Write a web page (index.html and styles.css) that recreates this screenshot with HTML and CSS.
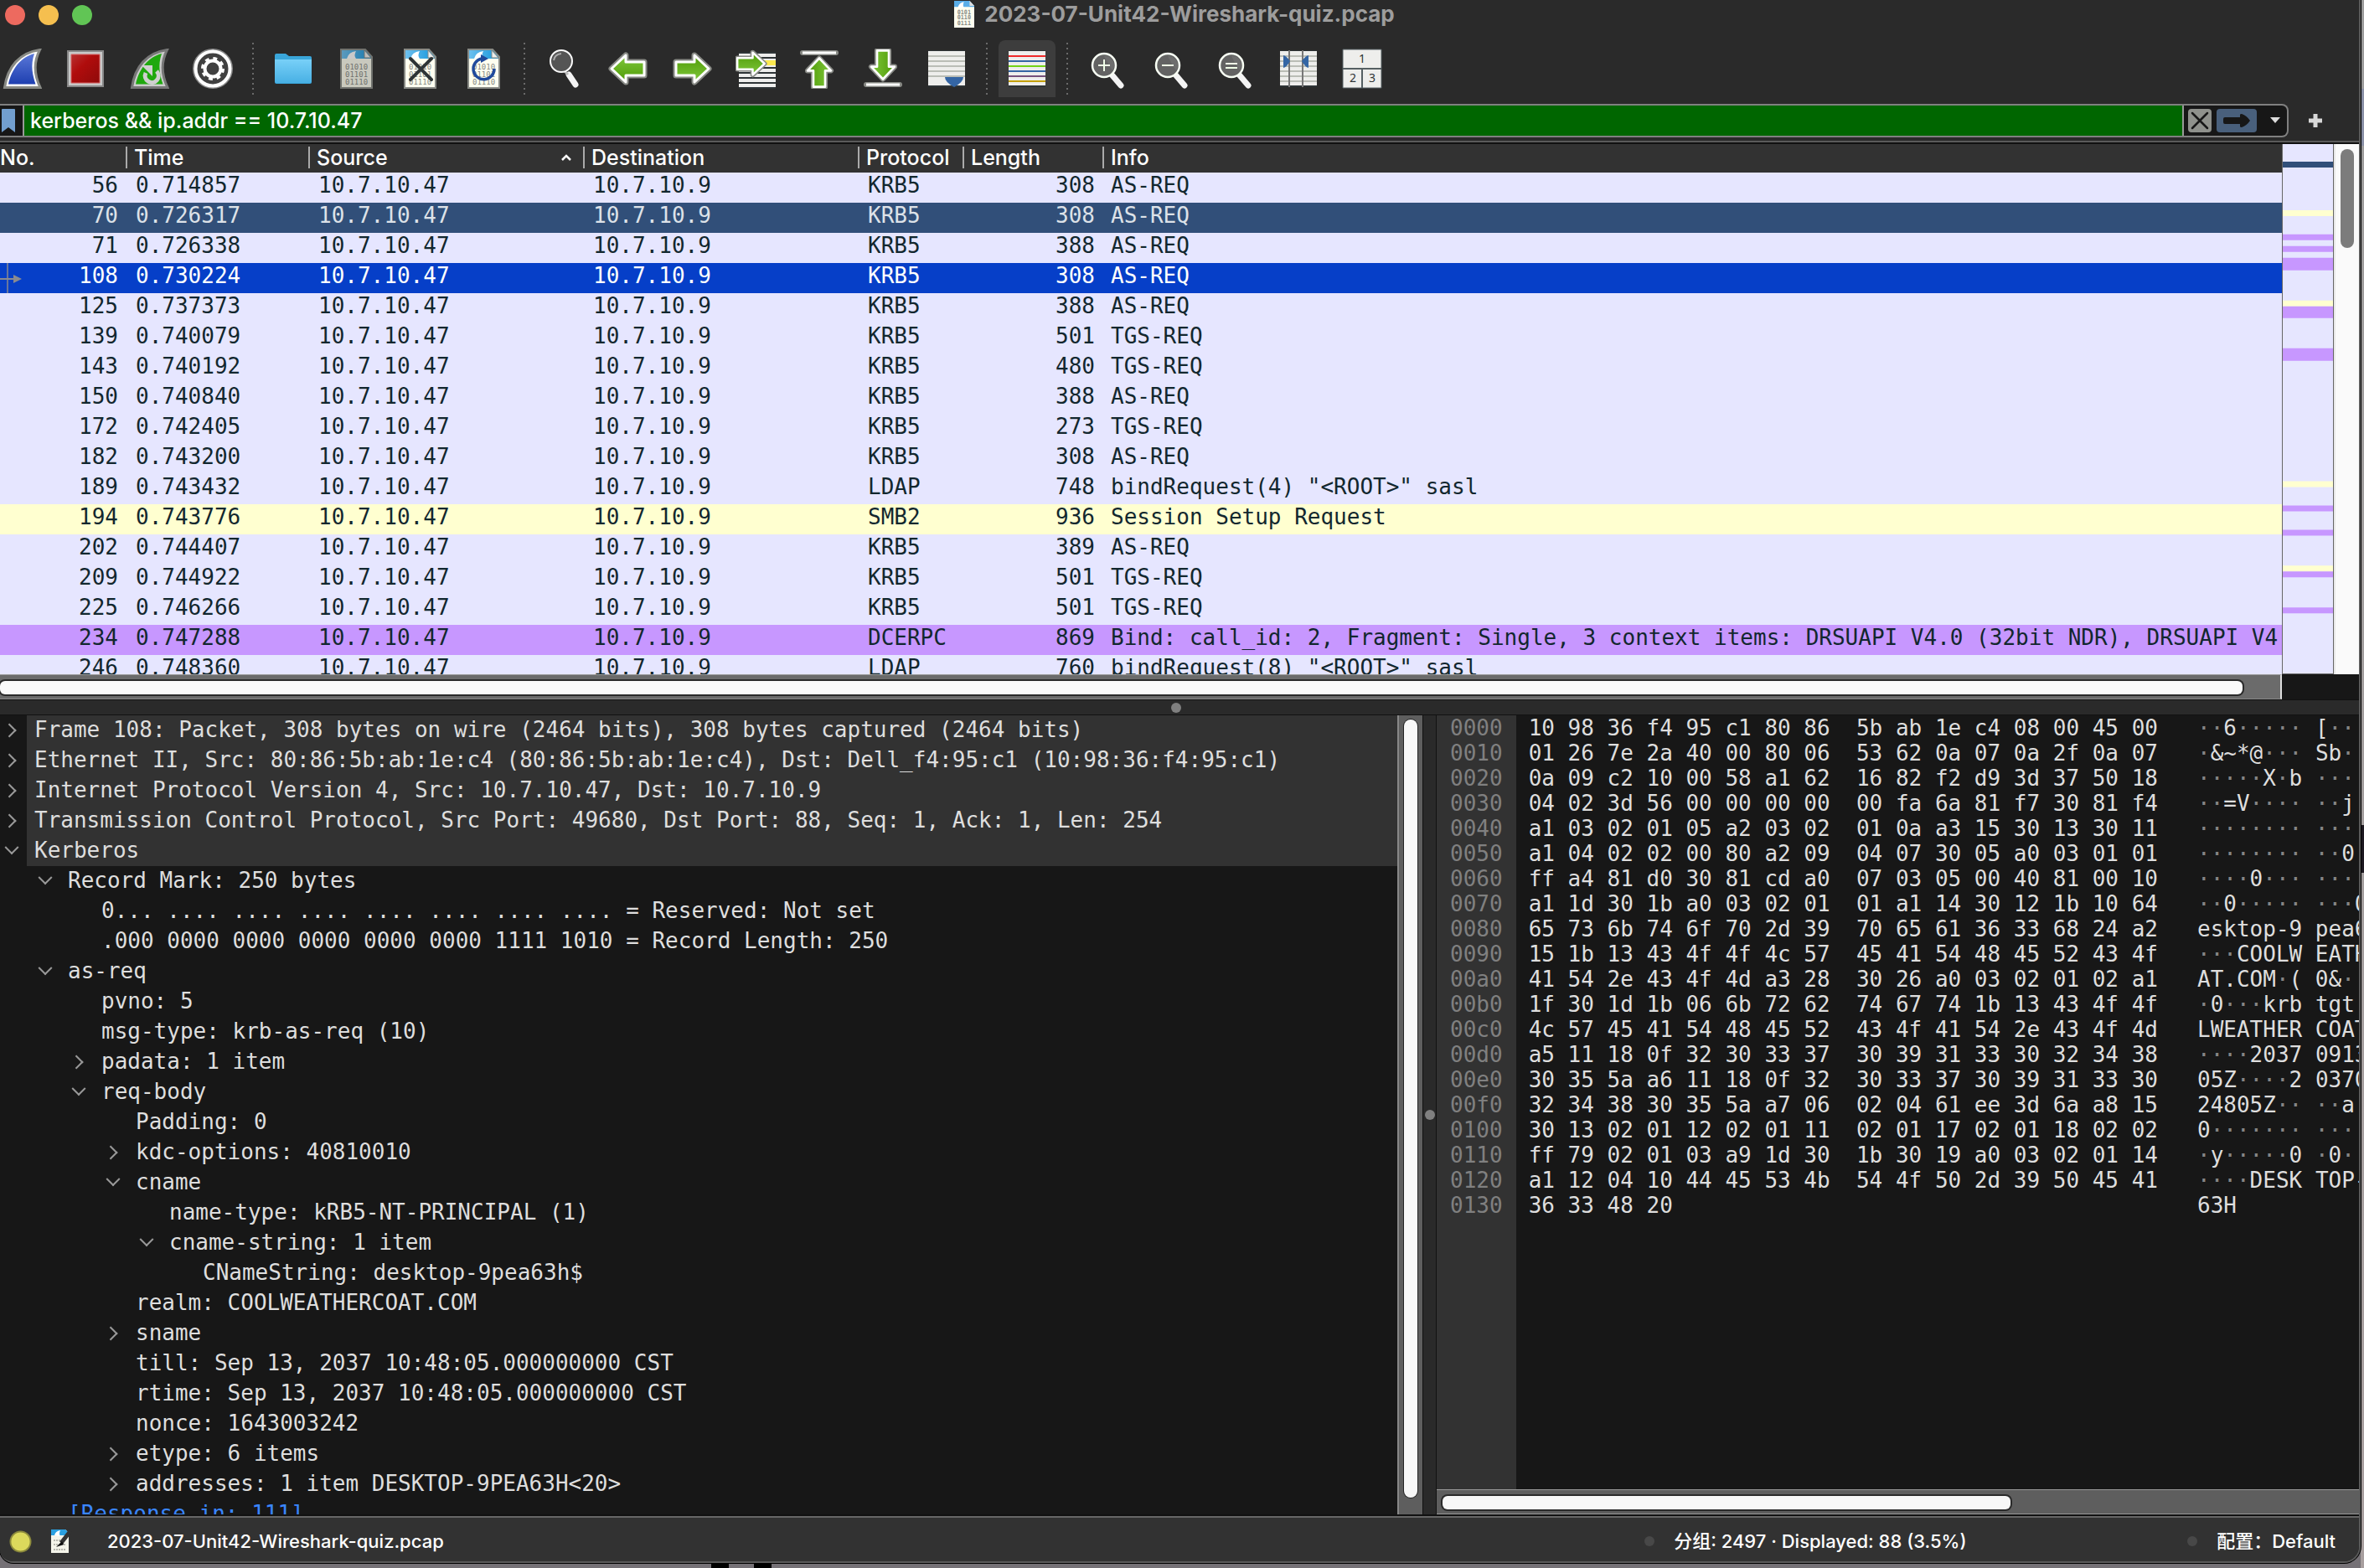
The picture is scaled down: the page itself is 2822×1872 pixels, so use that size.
FILE: index.html
```html
<!DOCTYPE html>
<html lang="en">
<head>
<meta charset="utf-8">
<title>2023-07-Unit42-Wireshark-quiz.pcap</title>
<link rel="stylesheet" href="styles.css">
</head>
<body>
<svg class="defs" aria-hidden="true">
  <defs>
    <linearGradient id="blue" x1="0" y1="0" x2="0" y2="1"><stop offset="0" stop-color="#5a78d8"/><stop offset="1" stop-color="#1e3fb0"/></linearGradient>
    <linearGradient id="red" x1="0" y1="0" x2="1" y2="1"><stop offset="0" stop-color="#b83030"/><stop offset=".4" stop-color="#b00c0c"/><stop offset="1" stop-color="#8e0a0a"/></linearGradient>
    <linearGradient id="green" x1="0" y1="0" x2="0" y2="1"><stop offset="0" stop-color="#80c83c"/><stop offset="1" stop-color="#4e9a06"/></linearGradient>
    <linearGradient id="sky" x1="0" y1="0" x2="1" y2="0"><stop offset="0" stop-color="#6ec0ee"/><stop offset="1" stop-color="#1496dc"/></linearGradient>
    <linearGradient id="folder" x1="0" y1="0" x2="0" y2="1"><stop offset="0" stop-color="#78d0f8"/><stop offset="1" stop-color="#48b0e4"/></linearGradient>
    <symbol id="doc" viewBox="0 0 39 48">
      <path d="M1 1H30L38 10V47H1Z" fill="#fffff0" stroke="#888a85" stroke-width="2"/>
      <path d="M2 2H30L37 10V12H2Z" fill="url(#sky)"/>
      <path d="M8 12Q10 4 19 3Q16 8 19 12Z" fill="#fff"/>
      <path d="M29 2V11H37Z" fill="#eeeeec" stroke="#888a85"/>
      <text x="6" y="25" class="bits">01010</text><text x="6" y="34" class="bits">01101</text><text x="6" y="43" class="bits">01110</text>
    </symbol>
    <symbol id="arrow" viewBox="0 0 48 40">
      <path d="M4 20L21 4V12H43V28H21V36Z" fill="#fff" stroke="#888a85" stroke-width="7" stroke-linejoin="round"/>
      <path d="M4 20L21 4V12H43V28H21V36Z" fill="url(#green)" stroke="#fff" stroke-width="3" stroke-linejoin="round"/>
    </symbol>
    <symbol id="lens" viewBox="0 0 44 44">
      <path d="M25 27L36 40" stroke="#f4f4f4" stroke-width="7" stroke-linecap="round"/>
      <circle cx="16" cy="16" r="14" fill="#636363" stroke="#f8fff4" stroke-width="2.500"/>
      <path d="M16 5A11 11 0 0 1 26 22Q20 14 16 5Z" fill="#777" opacity=".6"/>
    </symbol>
    <symbol id="lines" viewBox="0 0 44 44">
      <path d="M0 0H44V44H0Z" fill="#2e3436"/><path d="M0 1H44V42H0Z" fill="#eeeeec"/>
    </symbol>
  </defs>
</svg>
<div class="window">
  <header class="titlebar">
    <div class="lights"><button class="light close" aria-label="Close"></button><button class="light minimise" aria-label="Minimise"></button><button class="light zoom" aria-label="Zoom"></button></div>
    <svg class="title-icon" viewBox="0 0 39 48" preserveAspectRatio="none"><path d="M0 0H30L39 9V48H0Z" fill="#fffff0"/><path d="M0 0H30L39 9V11H0Z" fill="#5aaee8"/><path d="M7 12Q10 3 19 2Q16 8 19 12Z" fill="#fff"/><path d="M30 0V9H39Z" fill="#ddd"/><text x="6" y="24" class="bits big">0101</text><text x="6" y="33" class="bits big">0110</text><text x="6" y="43" class="bits big">0111</text></svg>
    <h1 class="title">2023-07-Unit42-Wireshark-quiz.pcap</h1>
  </header>

  <nav class="toolbar" aria-label="Main toolbar">
    <button class="tool" aria-label="Start capture"><svg viewBox="0 0 48 48"><path d="M3.500 46.500C7 22 21 5 45.500 1.500C37 18 40 34 46 46.500Z" fill="#fff" stroke="#888a85" stroke-width="3"/><path d="M8 42.500C12 24 23 10 39 6C34 20 37 32 40.500 42.500Z" fill="url(#blue)"/></svg></button>
    <button class="tool" aria-label="Stop capture"><svg viewBox="0 0 48 48"><path d="M3 3H45V45H3Z" fill="#c8c8c8" stroke="#888" stroke-width="2"/><path d="M7 7H41V41H7Z" fill="url(#red)" stroke="#d86060"/></svg></button>
    <button class="tool" aria-label="Restart capture"><svg viewBox="0 0 48 48"><path d="M3.500 46.500C7 22 21 5 45.500 1.500C37 18 40 34 46 46.500Z" fill="#ccc" stroke="#777" stroke-width="3"/><path d="M8 42.500C12 24 23 10 39 6C34 20 37 32 40.500 42.500Z" fill="#1fa80e"/><path d="M33 27A8 8 0 1 1 20 29" fill="none" stroke="#d0d0d0" stroke-width="5"/><path d="M15 20H28V33Z" fill="#d0d0d0"/></svg></button>
    <button class="tool" aria-label="Capture options"><svg viewBox="0 0 48 48"><circle cx="24" cy="24" r="22" fill="#404040" stroke="#888" stroke-width="4"/><circle cx="24" cy="24" r="20.500" fill="none" stroke="#fff" stroke-width="4"/><circle cx="24" cy="24" r="9.500" fill="none" stroke="#fff" stroke-width="4"/><circle cx="24" cy="24" r="12" fill="none" stroke="#fff" stroke-width="4" stroke-dasharray="4.700 4.725"/></svg></button>
    <span class="sep"></span>
    <button class="tool" aria-label="Open"><svg viewBox="0 0 48 48"><path d="M2 8Q2 6 4 6H15L19 9H44Q46 9 46 11V40Q46 42 44 42H4Q2 42 2 40Z" fill="#3aa6da"/><path d="M2 13H46V39Q46 41 44 41H4Q2 41 2 39Z" fill="url(#folder)"/></svg></button>
    <button class="tool" aria-label="Save" disabled><svg class="faded" viewBox="0 0 48 48"><use href="#doc" x="4" width="39" height="48"/></svg></button>
    <button class="tool" aria-label="Close file"><svg viewBox="0 0 48 48"><use href="#doc" x="4" width="39" height="48"/><path d="M12 12L37 37M37 12L12 37" stroke="#2e3436" stroke-width="4" stroke-linecap="round"/></svg></button>
    <button class="tool" aria-label="Reload"><svg viewBox="0 0 48 48"><use href="#doc" x="4" width="39" height="48"/><path d="M36 24A12.500 12.500 0 1 1 21 12" fill="none" stroke="#204a9c" stroke-width="3.500"/><path d="M20 7L29 12L20 17Z" fill="#204a9c"/></svg></button>
    <span class="sep"></span>
    <button class="tool" aria-label="Find packet"><svg viewBox="0 0 48 48"><path d="M29 31L37 43" stroke="#f4f4f4" stroke-width="7" stroke-linecap="round"/><path d="M24 27L28 31" stroke="#bbb" stroke-width="3"/><ellipse cx="20" cy="15" rx="13" ry="13" fill="#555" stroke="#fafafa" stroke-width="2"/><path d="M11 14Q12 7 20 6" fill="none" stroke="#aaa" stroke-width="2"/></svg></button>
    <button class="tool" aria-label="Previous packet"><svg viewBox="0 0 48 48"><use href="#arrow" y="4" width="48" height="40"/></svg></button>
    <button class="tool" aria-label="Next packet"><svg viewBox="0 0 48 48"><g transform="rotate(180 24 24)"><use href="#arrow" y="4" width="48" height="40"/></g></svg></button>
    <button class="tool" aria-label="Go to packet"><svg viewBox="0 0 48 48"><path d="M4 4H48V48H4Z" fill="#2e3436"/><path d="M4 8H48M4 14H48M4 20H48M4 26H48M4 32H48M4 38H48M4 44H48" stroke="#eeeeec" stroke-width="4"/><path d="M34 14H48V20H34Z" fill="#fce94f"/><g transform="rotate(180 19 18)"><use href="#arrow" x="0" y="1" width="40" height="34"/></g></svg></button>
    <button class="tool" aria-label="First packet"><svg viewBox="0 0 48 48"><path d="M4 5H44" stroke="#888a85" stroke-width="6" stroke-linecap="round"/><path d="M4 5H44" stroke="#fff" stroke-width="3"/><g transform="translate(24 28) rotate(90)"><use href="#arrow" x="-20" y="-18" width="42" height="36"/></g></svg></button>
    <button class="tool" aria-label="Last packet"><svg viewBox="0 0 48 48"><path d="M4 43H44" stroke="#888a85" stroke-width="6" stroke-linecap="round"/><path d="M4 43H44" stroke="#fff" stroke-width="3"/><g transform="translate(24 20) rotate(-90)"><use href="#arrow" x="-20" y="-18" width="42" height="36"/></g></svg></button>
    <button class="tool" aria-label="Auto scroll"><svg viewBox="0 0 48 48"><use href="#lines" x="2" y="2" width="44" height="44"/><path d="M2 9H46M2 15H46M2 21H46M2 27H46M2 33H46" stroke="#babdb6" stroke-width="2"/><path d="M22 34H44Q44 40 33 46Q22 40 22 34Z" fill="#3465a4"/></svg></button>
    <span class="sep"></span>
    <button class="tool pressed" aria-label="Colorize" aria-pressed="true"><svg viewBox="0 0 48 48"><use href="#lines" x="2" y="2" width="44" height="44"/><path d="M2 9H46" stroke="#ef2929" stroke-width="2"/><path d="M2 15H46M2 27H46" stroke="#3465a4" stroke-width="2"/><path d="M2 21H46" stroke="#73d216" stroke-width="2"/><path d="M2 33H46" stroke="#75507b" stroke-width="2"/><path d="M2 39H46" stroke="#c4a000" stroke-width="2"/></svg></button>
    <span class="sep"></span>
    <button class="tool" aria-label="Zoom in"><svg viewBox="0 0 48 48"><use href="#lens" x="4" y="4" width="44" height="44"/><path d="M13 20H27M20 13V27" stroke="#f0ffe8" stroke-width="2"/></svg></button>
    <button class="tool" aria-label="Zoom out"><svg viewBox="0 0 48 48"><use href="#lens" x="4" y="4" width="44" height="44"/><path d="M13 20H27" stroke="#f0ffe8" stroke-width="2"/></svg></button>
    <button class="tool" aria-label="Normal size"><svg viewBox="0 0 48 48"><use href="#lens" x="4" y="4" width="44" height="44"/><path d="M13 18H27M13 23H27" stroke="#f0ffe8" stroke-width="2"/></svg></button>
    <button class="tool" aria-label="Resize columns"><svg viewBox="0 0 48 48"><use href="#lines" x="2" y="2" width="44" height="44"/><path d="M2 9H46M2 15H46M2 21H46M2 27H46M2 33H46M2 39H46" stroke="#babdb6" stroke-width="2"/><path d="M13 2V46M29 2V46" stroke="#777" stroke-width="2"/><path d="M6 8Q10 9 14 15Q10 22 6 23ZM36 8Q32 9 28 15Q32 22 36 23Z" fill="#3465a4"/></svg></button>
    <button class="tool" aria-label="Layout"><svg viewBox="0 0 48 48"><path d="M1 1H47V47H1Z" fill="#eeeeec" stroke="#555f62" stroke-width="1"/><path d="M1 24H47M24 24V47" stroke="#555f62" stroke-width="2"/><text x="24" y="17" class="pane-no">1</text><text x="13" y="40" class="pane-no">2</text><text x="36" y="40" class="pane-no">3</text></svg></button>
  </nav>

  <form class="filter">
    <div class="filter-box">
      <button type="button" class="bookmark" aria-label="Filter bookmarks"><svg viewBox="0 0 16 28"><path d="M0 1Q0 0 1 0H15Q16 0 16 1V28L8 22L0 28Z" fill="#729fcf"/></svg></button>
      <input class="filter-input" type="text" aria-label="Display filter" value="kerberos &amp;&amp; ip.addr == 10.7.10.47">
      <div class="filter-actions">
        <button type="button" class="clear" aria-label="Clear filter"><svg viewBox="0 0 28 28"><path d="M5 5L23 23M23 5L5 23" stroke="#171717" stroke-width="2.500" stroke-linecap="round"/></svg></button>
        <button type="button" class="apply" aria-label="Apply filter"><svg viewBox="0 0 48 28"><path d="M8 12Q8 10 10 10H28V7Q28 6 30 6Q36 8 40 14Q36 20 30 22Q28 22 28 21V18H10Q8 18 8 16Z" fill="#171717"/></svg></button>
        <button type="button" class="drop" aria-label="Recent filters"><svg viewBox="0 0 12 8"><path d="M0 0H12L6 7Z" fill="#ddd"/></svg></button>
      </div>
    </div>
    <button type="button" class="plus" aria-label="Add filter button"><svg viewBox="0 0 16 16"><path d="M0 8H16M8 0V16" stroke="#d8d8d8" stroke-width="5"/></svg></button>
  </form>

  <main class="panes">
    <section class="packets" aria-label="Packet list">
      <div class="list">
        <table>
          <colgroup><col class="c-no"><col class="c-time"><col class="c-src"><col class="c-dst"><col class="c-proto"><col class="c-len"><col></colgroup>
          <thead><tr><th><span>No.</span></th><th><span>Time</span></th><th><span>Source<svg class="sort" viewBox="0 0 12 8"><path d="M1 7L6 2L11 7" fill="none" stroke="#fff" stroke-width="2.500"/></svg></span></th><th><span>Destination</span></th><th><span>Protocol</span></th><th><span>Length</span></th><th><span>Info</span></th></tr></thead>
          <tbody>
            <tr><td>56</td><td>0.714857</td><td>10.7.10.47</td><td>10.7.10.9</td><td>KRB5</td><td>308</td><td>AS-REQ</td></tr>
            <tr class="ignored"><td>70</td><td>0.726317</td><td>10.7.10.47</td><td>10.7.10.9</td><td>KRB5</td><td>308</td><td>AS-REQ</td></tr>
            <tr><td>71</td><td>0.726338</td><td>10.7.10.47</td><td>10.7.10.9</td><td>KRB5</td><td>388</td><td>AS-REQ</td></tr>
            <tr class="selected"><td><svg class="related" viewBox="0 0 28 36"><path d="M9 0V36" stroke="#8a8a90" stroke-width="1.500"/><path d="M0 19H18" stroke="#8a8a90" stroke-width="2"/><path d="M16 14L26 19L16 24Z" fill="#8a8a90"/></svg>108</td><td>0.730224</td><td>10.7.10.47</td><td>10.7.10.9</td><td>KRB5</td><td>308</td><td>AS-REQ</td></tr>
            <tr><td>125</td><td>0.737373</td><td>10.7.10.47</td><td>10.7.10.9</td><td>KRB5</td><td>388</td><td>AS-REQ</td></tr>
            <tr><td>139</td><td>0.740079</td><td>10.7.10.47</td><td>10.7.10.9</td><td>KRB5</td><td>501</td><td>TGS-REQ</td></tr>
            <tr><td>143</td><td>0.740192</td><td>10.7.10.47</td><td>10.7.10.9</td><td>KRB5</td><td>480</td><td>TGS-REQ</td></tr>
            <tr><td>150</td><td>0.740840</td><td>10.7.10.47</td><td>10.7.10.9</td><td>KRB5</td><td>388</td><td>AS-REQ</td></tr>
            <tr><td>172</td><td>0.742405</td><td>10.7.10.47</td><td>10.7.10.9</td><td>KRB5</td><td>273</td><td>TGS-REQ</td></tr>
            <tr><td>182</td><td>0.743200</td><td>10.7.10.47</td><td>10.7.10.9</td><td>KRB5</td><td>308</td><td>AS-REQ</td></tr>
            <tr><td>189</td><td>0.743432</td><td>10.7.10.47</td><td>10.7.10.9</td><td>LDAP</td><td>748</td><td>bindRequest(4) "&lt;ROOT&gt;" sasl</td></tr>
            <tr class="smb"><td>194</td><td>0.743776</td><td>10.7.10.47</td><td>10.7.10.9</td><td>SMB2</td><td>936</td><td>Session Setup Request</td></tr>
            <tr><td>202</td><td>0.744407</td><td>10.7.10.47</td><td>10.7.10.9</td><td>KRB5</td><td>389</td><td>AS-REQ</td></tr>
            <tr><td>209</td><td>0.744922</td><td>10.7.10.47</td><td>10.7.10.9</td><td>KRB5</td><td>501</td><td>TGS-REQ</td></tr>
            <tr><td>225</td><td>0.746266</td><td>10.7.10.47</td><td>10.7.10.9</td><td>KRB5</td><td>501</td><td>TGS-REQ</td></tr>
            <tr class="rpc"><td>234</td><td>0.747288</td><td>10.7.10.47</td><td>10.7.10.9</td><td>DCERPC</td><td>869</td><td>Bind: call_id: 2, Fragment: Single, 3 context items: DRSUAPI V4.0 (32bit NDR), DRSUAPI V4.</td></tr>
            <tr><td>246</td><td>0.748360</td><td>10.7.10.47</td><td>10.7.10.9</td><td>LDAP</td><td>760</td><td>bindRequest(8) "&lt;ROOT&gt;" sasl</td></tr>
          </tbody>
        </table>
      </div>
      <svg class="minimap" viewBox="0 0 60 633" preserveAspectRatio="none" aria-hidden="true">
        <path d="M0 21H60V28H0Z" fill="#314f79"/>
        <path d="M0 79H60V86H0ZM0 187H60V194H0ZM0 403H60V410H0ZM0 504H60V511H0Z" fill="#ffffd0"/>
        <path d="M0 108H60V115H0ZM0 122H60V129H0ZM0 136H60V151H0ZM0 194H60V208H0ZM0 244H60V259H0ZM0 432H60V439H0ZM0 461H60V468H0ZM0 511H60V518H0ZM0 554H60V561H0Z" fill="#c797ff"/>
      </svg>
      <div class="vbar light-bar"><div class="thumb"></div></div>
      <div class="hbar"><div class="thumb"></div></div>
      <div class="corner"></div>
    </section>
    <div class="split-h"><i class="grip"></i></div>
    <section class="lower">
      <div class="details" aria-label="Packet details">
        <ul class="tree">
          <li class="row top shut">Frame 108: Packet, 308 bytes on wire (2464 bits), 308 bytes captured (2464 bits)</li>
          <li class="row top shut">Ethernet II, Src: 80:86:5b:ab:1e:c4 (80:86:5b:ab:1e:c4), Dst: Dell_f4:95:c1 (10:98:36:f4:95:c1)</li>
          <li class="row top shut">Internet Protocol Version 4, Src: 10.7.10.47, Dst: 10.7.10.9</li>
          <li class="row top shut">Transmission Control Protocol, Src Port: 49680, Dst Port: 88, Seq: 1, Ack: 1, Len: 254</li>
          <li class="row top open">Kerberos</li>
          <li class="row l1 open">Record Mark: 250 bytes</li>
          <li class="row l2">0... .... .... .... .... .... .... .... = Reserved: Not set</li>
          <li class="row l2">.000 0000 0000 0000 0000 0000 1111 1010 = Record Length: 250</li>
          <li class="row l1 open">as-req</li>
          <li class="row l2">pvno: 5</li>
          <li class="row l2">msg-type: krb-as-req (10)</li>
          <li class="row l2 shut">padata: 1 item</li>
          <li class="row l2 open">req-body</li>
          <li class="row l3">Padding: 0</li>
          <li class="row l3 shut">kdc-options: 40810010</li>
          <li class="row l3 open">cname</li>
          <li class="row l4">name-type: kRB5-NT-PRINCIPAL (1)</li>
          <li class="row l4 open">cname-string: 1 item</li>
          <li class="row l5">CNameString: desktop-9pea63h$</li>
          <li class="row l3">realm: COOLWEATHERCOAT.COM</li>
          <li class="row l3 shut">sname</li>
          <li class="row l3">till: Sep 13, 2037 10:48:05.000000000 CST</li>
          <li class="row l3">rtime: Sep 13, 2037 10:48:05.000000000 CST</li>
          <li class="row l3">nonce: 1643003242</li>
          <li class="row l3 shut">etype: 6 items</li>
          <li class="row l3 shut">addresses: 1 item DESKTOP-9PEA63H&lt;20&gt;</li>
          <li class="row l1"><a href="#frame-111">[Response in: 111]</a></li>
        </ul>
        <div class="vbar"><div class="thumb"></div></div>
      </div>
      <div class="split-v"><i class="grip"></i></div>
      <div class="bytes" aria-label="Packet bytes">
        <div class="dump">
<pre class="offsets">0000
0010
0020
0030
0040
0050
0060
0070
0080
0090
00a0
00b0
00c0
00d0
00e0
00f0
0100
0110
0120
0130</pre>
<pre class="hex">10 98 36 f4 95 c1 80 86  5b ab 1e c4 08 00 45 00
01 26 7e 2a 40 00 80 06  53 62 0a 07 0a 2f 0a 07
0a 09 c2 10 00 58 a1 62  16 82 f2 d9 3d 37 50 18
04 02 3d 56 00 00 00 00  00 fa 6a 81 f7 30 81 f4
a1 03 02 01 05 a2 03 02  01 0a a3 15 30 13 30 11
a1 04 02 02 00 80 a2 09  04 07 30 05 a0 03 01 01
ff a4 81 d0 30 81 cd a0  07 03 05 00 40 81 00 10
a1 1d 30 1b a0 03 02 01  01 a1 14 30 12 1b 10 64
65 73 6b 74 6f 70 2d 39  70 65 61 36 33 68 24 a2
15 1b 13 43 4f 4f 4c 57  45 41 54 48 45 52 43 4f
41 54 2e 43 4f 4d a3 28  30 26 a0 03 02 01 02 a1
1f 30 1d 1b 06 6b 72 62  74 67 74 1b 13 43 4f 4f
4c 57 45 41 54 48 45 52  43 4f 41 54 2e 43 4f 4d
a5 11 18 0f 32 30 33 37  30 39 31 33 30 32 34 38
30 35 5a a6 11 18 0f 32  30 33 37 30 39 31 33 30
32 34 38 30 35 5a a7 06  02 04 61 ee 3d 6a a8 15
30 13 02 01 12 02 01 11  02 01 17 02 01 18 02 02
ff 79 02 01 03 a9 1d 30  1b 30 19 a0 03 02 01 14
a1 12 04 10 44 45 53 4b  54 4f 50 2d 39 50 45 41
36 33 48 20</pre>
<pre class="ascii">··<b>6</b>····· <b>[</b>···
·<b>&amp;~*@</b>··· <b>Sb</b>··
·····<b>X</b>·<b>b</b> ····
··<b>=V</b>···· ··<b>j</b>·
········ ····
········ ··<b>0</b>·
····<b>0</b>··· ····
··<b>0</b>····· ···<b>0</b>
<b>esktop-9 pea6</b>
···<b>COOLW EATH</b>
<b>AT.COM</b>·<b>( 0&amp;</b>··
·<b>0</b>···<b>krb tgt</b>·
<b>LWEATHER COAT</b>
····<b>2037 0913</b>
<b>05Z</b>····<b>2 0370</b>
<b>24805Z</b>·· ··<b>a</b>·
<b>0</b>······· ····
·<b>y</b>·····<b>0</b> ·<b>0</b>··
····<b>DESK TOP-</b>
<b>63H</b></pre>
        </div>
        <div class="hbar"><div class="thumb"></div></div>
      </div>
    </section>
  </main>

  <footer class="status">
    <div class="file">
      <svg class="expert" viewBox="0 0 28 28"><circle cx="14" cy="14" r="12.500" fill="#dcd95c" stroke="#8c8a3c" stroke-width="2"/></svg>
      <svg class="comment" viewBox="0 0 28 30"><path d="M1 1H18L22 5V29H1Z" fill="#f4f4ea"/><path d="M1 1H18L22 5V8H1Z" fill="#2aa0e0"/><path d="M5 8Q6 3 12 2Q10 6 12 9Z" fill="#fff"/><path d="M4 14H18M4 19H18M4 25H18" stroke="#b8b8b0" stroke-width="2" stroke-dasharray="2 1"/><path d="M24 3L13 17" stroke="#333" stroke-width="5"/><path d="M14 15L7 22L16 19Z" fill="#111"/></svg>
      <span>2023-07-Unit42-Wireshark-quiz.pcap</span>
    </div>
    <div class="count"><i class="dot"></i>分组: 2497 · Displayed: 88 (3.5%)</div>
    <div class="profile"><i class="dot"></i>配置：Default</div>
  </footer>
</div>
</body>
</html>
```
FILE: styles.css
```css
*, *::before { box-sizing: border-box; }

body {
  margin: 0;
  height: 100vh;
  overflow: hidden;
  padding: 0 4px 6px 0;
  background:
    linear-gradient(#000, #000) 849px 100% / 21px 6px no-repeat,
    linear-gradient(#000, #000) 900px 100% / 21px 6px no-repeat,
    linear-gradient(#8a90a6, #8a90a6) 100% 106px / 4px 68px no-repeat,
    linear-gradient(#1c1820, #1c1820) 100% 985px / 4px 57px no-repeat,
    linear-gradient(#9c9c9c, #a89f9f) 100% 0 / 4px 100% no-repeat,
    #757176;
  color: #fff;
  font-family: Inter, "Noto Sans CJK SC", sans-serif;
  font-size: 22px;
}

button { margin: 0; padding: 0; border: 0; background: none; }
svg { display: block; }
.defs { position: absolute; width: 0; height: 0; }

.window {
  height: 100%;
  display: flex;
  flex-direction: column;
  overflow: hidden;
  background: #2a2a2a;
  border: solid #5a5a5a;
  border-width: 0 2px 2px 0;
  border-radius: 0 0 20px 16px;
  box-shadow: 0 0 0 1px #000;
}

/* Title bar */
.titlebar {
  flex: none;
  height: 36px;
  display: flex;
  align-items: center;
  justify-content: center;
  gap: 12px;
  position: relative;
  padding: 0 12px 2px 0;
}
.lights { position: absolute; left: 6px; top: 6px; display: flex; gap: 16px; }
.light { width: 24px; height: 24px; border-radius: 50%; }
.close { background: #ed6a5f; }
.minimise { background: #f5bf4f; }
.zoom { background: #61c555; }
.title-icon { width: 24px; height: 32px; }
.title { margin: 0; font-size: 26px; line-height: 32px; font-weight: 700; color: #9d9d9d; }
.bits { font: 9px "DejaVu Sans Mono", monospace; fill: #888a85; }
.bits.big { font-size: 11px; font-weight: 700; }

/* Toolbar */
.toolbar {
  flex: none;
  height: 88px;
  display: flex;
  align-items: center;
  margin-left: -12px;
  padding-top: 4px;
}
.tool { flex: none; width: 68px; height: 68px; margin: 0 4px; padding: 10px; border-radius: 8px 8px 0 0; }
.tool svg { width: 48px; height: 48px; }
.tool.pressed { background: #3d3d3d; }
.faded { opacity: .75; }
.sep {
  flex: none;
  width: 2px;
  height: 62px;
  margin: 0 9px;
  background: repeating-linear-gradient(#6a6a6a 0 2px, transparent 2px 6px);
}
.pane-no { font: 14px "Noto Sans", sans-serif; text-anchor: middle; fill: #2e3436; }

/* Filter bar */
.filter {
  flex: none;
  display: flex;
  align-items: center;
  gap: 24px;
  padding: 0 44px 4px 0;
  border-bottom: 2px solid #5a5a5a;
  box-shadow: 0 2px 0 #111;
  margin-bottom: 2px;
}
.filter-box {
  flex: 1;
  height: 40px;
  display: flex;
  overflow: hidden;
  background: #171717;
  border: solid #808080;
  border-width: 2px 2px 2px 0;
  border-radius: 0 8px 8px 0;
}
.bookmark { width: 29px; padding: 4px 9px 4px 2px; border-right: 2px solid #999; }
.bookmark svg { width: 16px; height: 28px; }
.filter-input {
  flex: 1;
  min-width: 0;
  padding: 0 7px;
  border: 0;
  outline: 0;
  background: #006600;
  color: #fff;
  font: 500 25px/36px Inter, sans-serif;
}
.filter-actions { display: flex; align-items: center; gap: 6px; padding: 0 8px 0 5px; border-left: 2px solid #999; }
.clear { width: 28px; height: 28px; background: #8f918c; border-radius: 4px; }
.apply { width: 48px; height: 28px; background: #49607c; border-radius: 4px; }
.drop { padding: 0 0 0 10px; }
.drop svg { width: 12px; height: 8px; }
.plus svg { width: 16px; height: 16px; }

/* Panes */
.panes { flex: 1; min-height: 0; display: flex; flex-direction: column; background: #2a2a2a; }
.packets {
  flex: 664 1 0;
  min-height: 0;
  display: grid;
  grid-template: minmax(0, 1fr) 30px / minmax(0, 1fr) 62px 30px;
}
.list { overflow: hidden; background: #e6e6ff; }
table {
  width: 100%;
  table-layout: fixed;
  border-collapse: collapse;
  color: #12272e;
  font: 26px/30px "DejaVu Sans Mono", monospace;
}
.c-no { width: 152px; }
.c-time { width: 218px; }
.c-src { width: 328px; }
.c-dst { width: 328px; }
.c-proto { width: 125px; }
.c-len { width: 167px; }
th {
  height: 34px;
  padding: 0 0 2px;
  background: #323232;
  color: #fff;
  font: 500 25px/26px Inter, sans-serif;
  text-align: left;
}
th span { display: flex; align-items: center; justify-content: space-between; padding: 0 14px 0 8px; border-right: 2px solid #aaa; white-space: nowrap; }
th:first-child span { padding-left: 0; }
th:last-child span { border: 0; }
.sort { width: 12px; height: 8px; }
td { height: 36px; padding: 0 0 6px 10px; white-space: nowrap; overflow: hidden; }
td:first-child, td:nth-child(6) { text-align: right; padding-right: 11px; }
td:first-child { position: relative; }
td:last-child { padding-left: 8px; }
.related { position: absolute; left: 0; top: 0; width: 28px; height: 36px; }
.ignored { background: #314f79; color: #dde2e8; }
.selected { background: #063fc8; color: #fff; }
.smb { background: #ffffd0; }
.rpc { background: #c797ff; }
.minimap { width: 100%; height: 100%; background: #e6e6ff; border: solid #666; border-width: 0 1px 1px; }

.vbar { width: 30px; padding: 5px 6px 20px 8px; background: #5e5e5e; border-left: 2px solid #888; }
.vbar .thumb { width: 16px; height: 100%; border-radius: 8px; background: #f7f7f7; box-shadow: 0 0 0 1px #222; margin-left: -2px; }
.light-bar { padding: 6px; background: #fafafa; border-color: #e8e8e8; }
.light-bar .thumb { height: 19%; margin-left: 0; background: #7c7c7c; box-shadow: none; }
.hbar { height: 30px; padding: 7px 0 0; background: #6b6b6b; border: solid #999; border-width: 1px 0; }
.hbar .thumb { height: 16px; border-radius: 6px; background: #fafafa; box-shadow: 0 0 0 2px #2a2a2a; }
.packets .hbar { border-right: 2px solid #ddd; border-bottom-color: #888; }
.packets .hbar .thumb { width: calc(100% - 45px); }
.corner { grid-column: 2 / 4; background: #171717; }

.split-h, .split-v { flex: none; display: flex; align-items: center; justify-content: center; border: 0 solid #111; }
.split-h { height: 19px; border-width: 1px 0; padding-right: 8px; }
.split-v { border-width: 0 1px; }
.grip { width: 12px; height: 12px; border-radius: 50%; background: #808080; }

.lower {
  flex: 955 1 0;
  min-height: 0;
  display: grid;
  grid-template-columns: 1698fr 17px 1101fr;
  font: 26px/30px "DejaVu Sans Mono", monospace;
  color: #dedede;
  border-bottom: 2px solid #111;
}
.details { display: flex; min-width: 0; overflow: hidden; background: #171717; }
.tree { flex: 1; min-width: 0; margin: 0; padding: 0; list-style: none; overflow: hidden; }
.row {
  display: flex;
  height: 36px;
  line-height: 34px;
  white-space: pre;
}
.row::before { content: ""; flex: none; align-self: center; width: 12px; height: 12px; margin: 0 21px 0 8px; }
.shut::before { border: solid #999; border-width: 2px 2px 0 0; transform: rotate(45deg) translate(-2px, 2px); }
.open::before { border: solid #999; border-width: 0 2px 2px 0; transform: rotate(45deg) translate(-3px, -3px); }
.top { background: linear-gradient(to right, #171717 32px, #323232 32px); }
.l1 { padding-left: 40px; }
.l2 { padding-left: 80px; }
.l3 { padding-left: 121px; }
.l4 { padding-left: 161px; }
.l5 { padding-left: 201px; }
.row a { color: #3a86ff; text-decoration: none; }

.bytes { min-width: 0; display: flex; flex-direction: column; overflow: hidden; background: #171717; }
.dump { flex: 1; min-height: 0; display: flex; overflow: hidden; }
pre { flex: none; margin: 0; font: inherit; }
.offsets { padding: 0 16px; background: #323232; color: #808080; }
.hex { padding: 0 47px 0 15px; }
.ascii { color: #858585; }
.ascii b { font-weight: 400; color: #dedede; }
.bytes .hbar { flex: none; background: #5e5e5e; padding-left: 7px; }
.bytes .hbar .thumb { width: 62%; background: #f7f7f7; }

/* Status bar */
.status {
  flex: none;
  height: 54px;
  display: grid;
  grid-template-columns: 1fr 648px auto;
  align-items: center;
  padding: 4px 28px 0 11px;
  background: #323232;
  border-top: 2px solid #666;
  font-weight: 500;
  line-height: 30px;
  white-space: nowrap;
}
.file, .count, .profile { display: flex; align-items: center; }
.expert { width: 27px; height: 27px; }
.comment { width: 28px; height: 30px; margin: 0 40px 0 22px; }
.dot { width: 12px; height: 12px; margin-right: 23px; border-radius: 50%; background: #484848; }
```
